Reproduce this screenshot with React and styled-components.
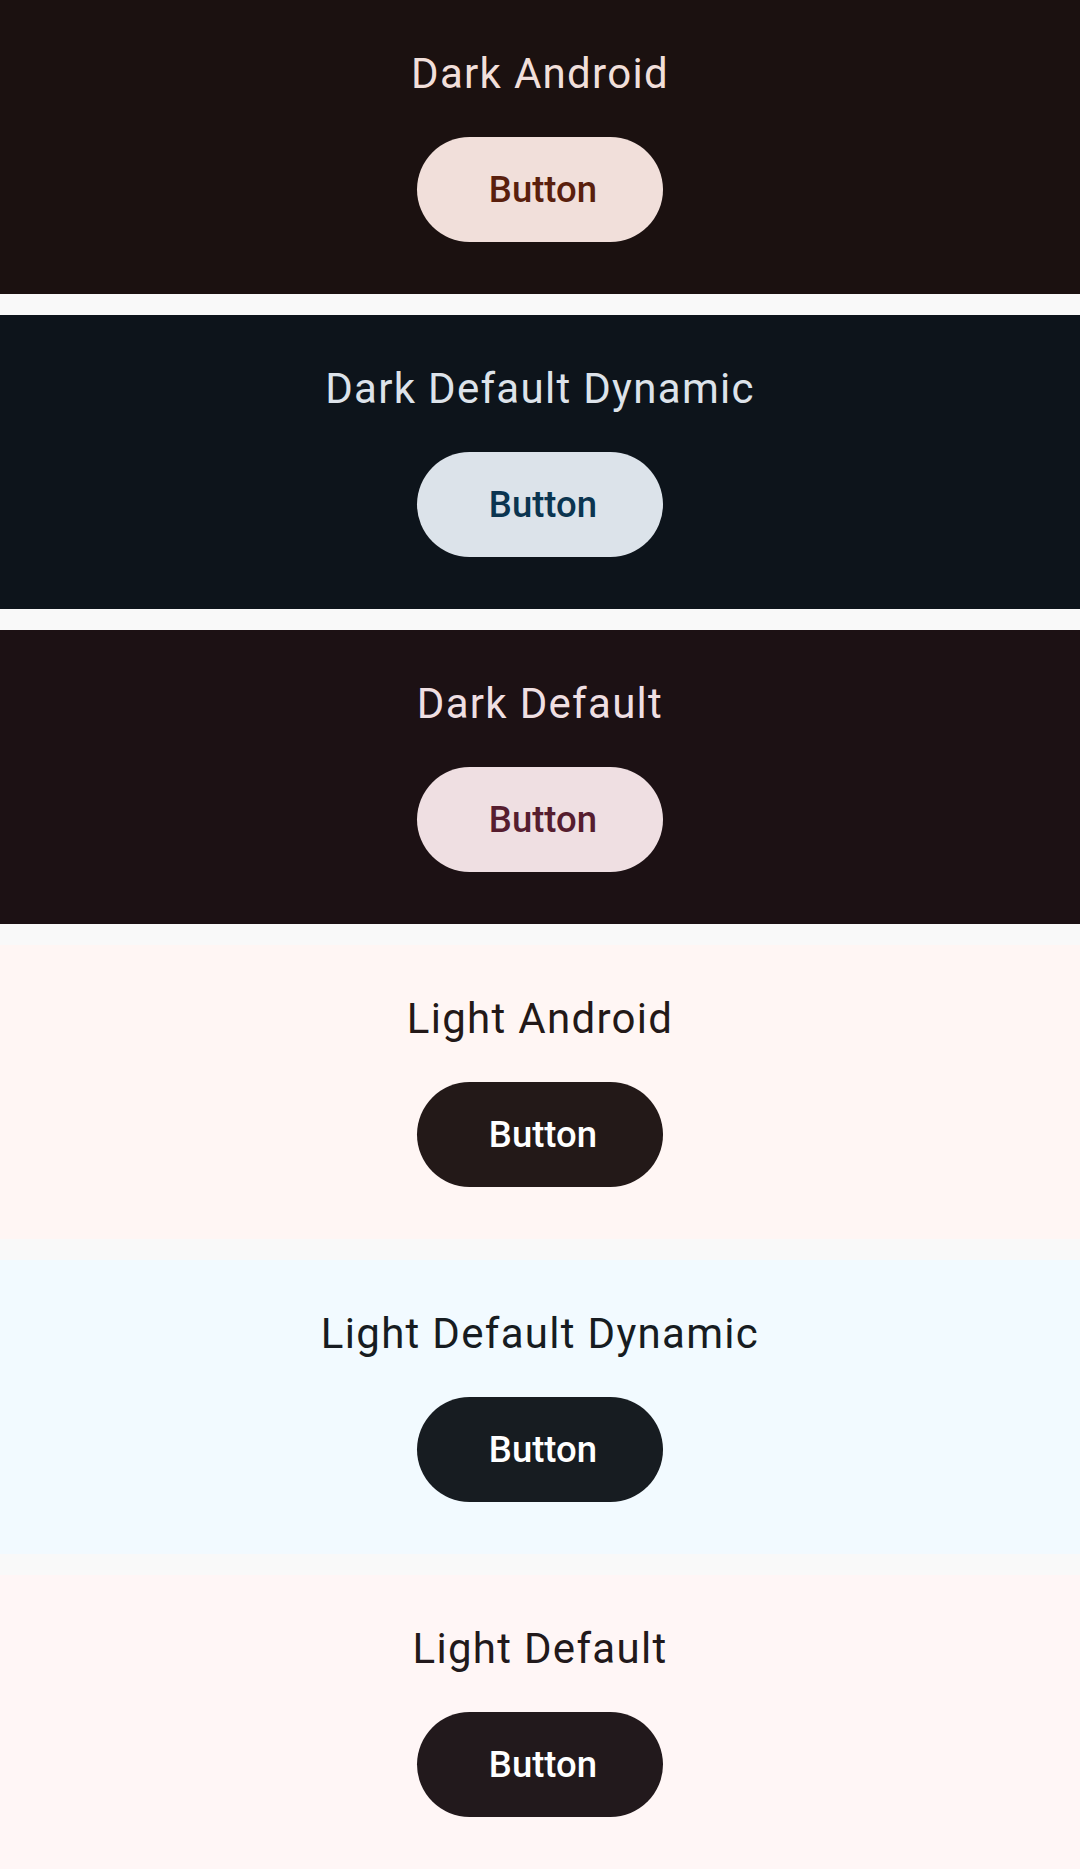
import React from "react";
import styled, { createGlobalStyle } from "styled-components";

const themes = [
  {
    name: "Dark Android",
    bg: "#1b1110",
    title: "#f1dfda",
    button: "#f1dfda",
    label: "#5a1f0d",
  },
  {
    name: "Dark Default Dynamic",
    bg: "#0d141b",
    title: "#dde3ea",
    button: "#dce3ea",
    label: "#0b3550",
  },
  {
    name: "Dark Default",
    bg: "#1c1114",
    title: "#efdfe2",
    button: "#efdfe2",
    label: "#561d2f",
  },
  {
    name: "Light Android",
    bg: "#fff6f4",
    title: "#231918",
    button: "#231918",
    label: "#ffffff",
  },
  {
    name: "Light Default Dynamic",
    bg: "#f2faff",
    title: "#171c21",
    button: "#171c21",
    label: "#ffffff",
  },
  {
    name: "Light Default",
    bg: "#fff6f6",
    title: "#22191b",
    button: "#22191c",
    label: "#ffffff",
  },
];

function App() {
  return (
    <>
      <GlobalStyle />
      <Page>
        {themes.map((t) => (
          <Preview key={t.name} bg={t.bg}>
            <Title color={t.title}>{t.name}</Title>
            <FilledButton bg={t.button} fg={t.label}>
              Button
            </FilledButton>
          </Preview>
        ))}
      </Page>
    </>
  );
}

export default App;

const GlobalStyle = createGlobalStyle`
  html, body {
    margin: 0;
    padding: 0;
    background: #f9f9f9;
    font-family: Roboto, "Noto Sans", sans-serif;
  }
`;

const Page = styled.div`
  width: 1080px;
  display: flex;
  flex-direction: column;
  gap: 21px;
`;

const Preview = styled.section`
  height: 294px;
  box-sizing: border-box;
  padding-top: 42px;
  display: flex;
  flex-direction: column;
  align-items: center;
  background: ${(props) => props.bg};
`;

const Title = styled.div`
  font-size: 42px;
  line-height: 63px;
  font-weight: 400;
  letter-spacing: 1.3px;
  color: ${(props) => props.color};
`;

const FilledButton = styled.button`
  margin-top: 32px;
  height: 105px;
  padding: 0 66px 0 72px;
  border: none;
  border-radius: 53px;
  font-family: Roboto, "Noto Sans", sans-serif;
  font-size: 36.5px;
  font-weight: 500;
  letter-spacing: 0;
  background: ${(props) => props.bg};
  color: ${(props) => props.fg};
  cursor: pointer;
`;
